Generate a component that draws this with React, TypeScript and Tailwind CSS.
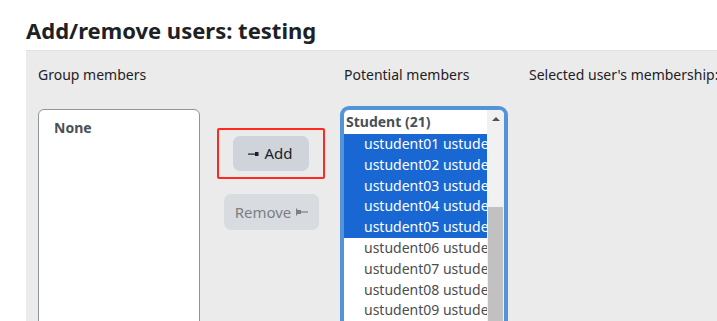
import React from "react";

const font = { fontFamily: '"Noto Sans", "Open Sans", sans-serif' };

function AddIcon() {
  return (
    <svg width="11" height="6" viewBox="0 0 11 6" className="inline-block mr-[5px] align-middle">
      <rect x="0" y="2.5" width="7" height="1.2" fill="#1d2125" />
      <rect x="7" y="1" width="3.5" height="4" fill="#1d2125" />
    </svg>
  );
}

function RemoveIcon() {
  return (
    <svg width="12" height="8" viewBox="0 0 12 8" className="inline-block ml-[5px] align-middle">
      <rect x="0" y="0.5" width="1.2" height="7" fill="#7b7f83" />
      <rect x="1" y="2" width="4" height="4" fill="#7b7f83" />
      <rect x="5" y="3.4" width="7" height="1.2" fill="#7b7f83" />
    </svg>
  );
}

export default function App() {
  const users = ["01", "02", "03", "04", "05", "06", "07", "08", "09", "10"];
  return (
    <div className="w-[717px] h-[321px] overflow-hidden bg-white text-[#1d2125]" style={font}>
      <h3 className="pl-[26px] pt-[15px] h-[50px] text-[22px] font-bold leading-[30px] text-[#1d2125]">
        Add/remove users: testing
      </h3>
      <div className="ml-[26px] h-[271px] bg-[#ebebeb] border-t border-[#dee2e6] flex pl-[12px] pt-[13px] overflow-hidden">
        <div className="w-[162px] shrink-0 flex flex-col">
          <div className="text-[14px] leading-[22px] h-[45px] shrink-0">Group members</div>
          <div className="h-[300px] shrink-0 bg-white border border-[#8f959e] rounded-[6px] pl-[15px] pt-[8px]">
            <div className="font-bold text-[14px] leading-[20px] text-[#495057]">None</div>
          </div>
        </div>
        <div className="w-[143px] shrink-0 flex flex-col items-center pt-[64px]">
          <div className="border-[2px] border-[#ff2a1f] rounded-[2px] px-[14px] pt-[6px] pb-[6px] -ml-[2px]">
            <div className="bg-[#ced4da] rounded-[7px] w-[76px] h-[35px] flex items-center justify-center text-[15px] text-[#1d2125]">
              <AddIcon />
              Add
            </div>
          </div>
          <div className="mt-[15px] bg-[#d8dbdf] rounded-[7px] w-[95px] h-[36px] flex items-center justify-center text-[15px] text-[#7b7f83]">
            Remove
            <RemoveIcon />
          </div>
        </div>
        <div className="w-[162px] shrink-0 flex flex-col">
          <div className="text-[14px] leading-[22px] h-[45px] shrink-0 pl-[1px]">Potential members</div>
          <div className="h-[300px] shrink-0 bg-white border border-[#5394d8] rounded-[6px] ring-[3px] ring-[#5394d8] flex overflow-hidden">
            <div className="flex-1 overflow-hidden">
              <div className="font-bold text-[14px] leading-[24px] text-[#495057] pl-[2px] whitespace-nowrap">
                Student (21)
              </div>
              {users.map((u, i) => (
                <div
                  key={u}
                  className={
                    i < 5
                      ? "bg-[#1967d2] text-white text-[14px] leading-[20.8px] pl-[20px] whitespace-nowrap"
                      : "text-[#4d4d4d] text-[14px] leading-[20.8px] pl-[20px] whitespace-nowrap"
                  }
                >
                  ustudent{u} ustudent{u}
                </div>
              ))}
            </div>
            <div className="w-[17px] shrink-0 bg-[#f1f1f1] flex flex-col items-center">
              <div className="h-[17px] shrink-0 flex items-center justify-center">
                <div className="w-0 h-0 border-l-[4px] border-r-[4px] border-b-[4px] border-l-transparent border-r-transparent border-b-[#505050]" />
              </div>
              <div className="mt-[80px] w-[15px] h-[200px] shrink-0 bg-[#c1c1c1]" />
            </div>
          </div>
        </div>
        <div className="pl-[24px] shrink-0">
          <div className="text-[14px] leading-[22px] whitespace-nowrap">Selected user's membership:</div>
        </div>
      </div>
    </div>
  );
}
